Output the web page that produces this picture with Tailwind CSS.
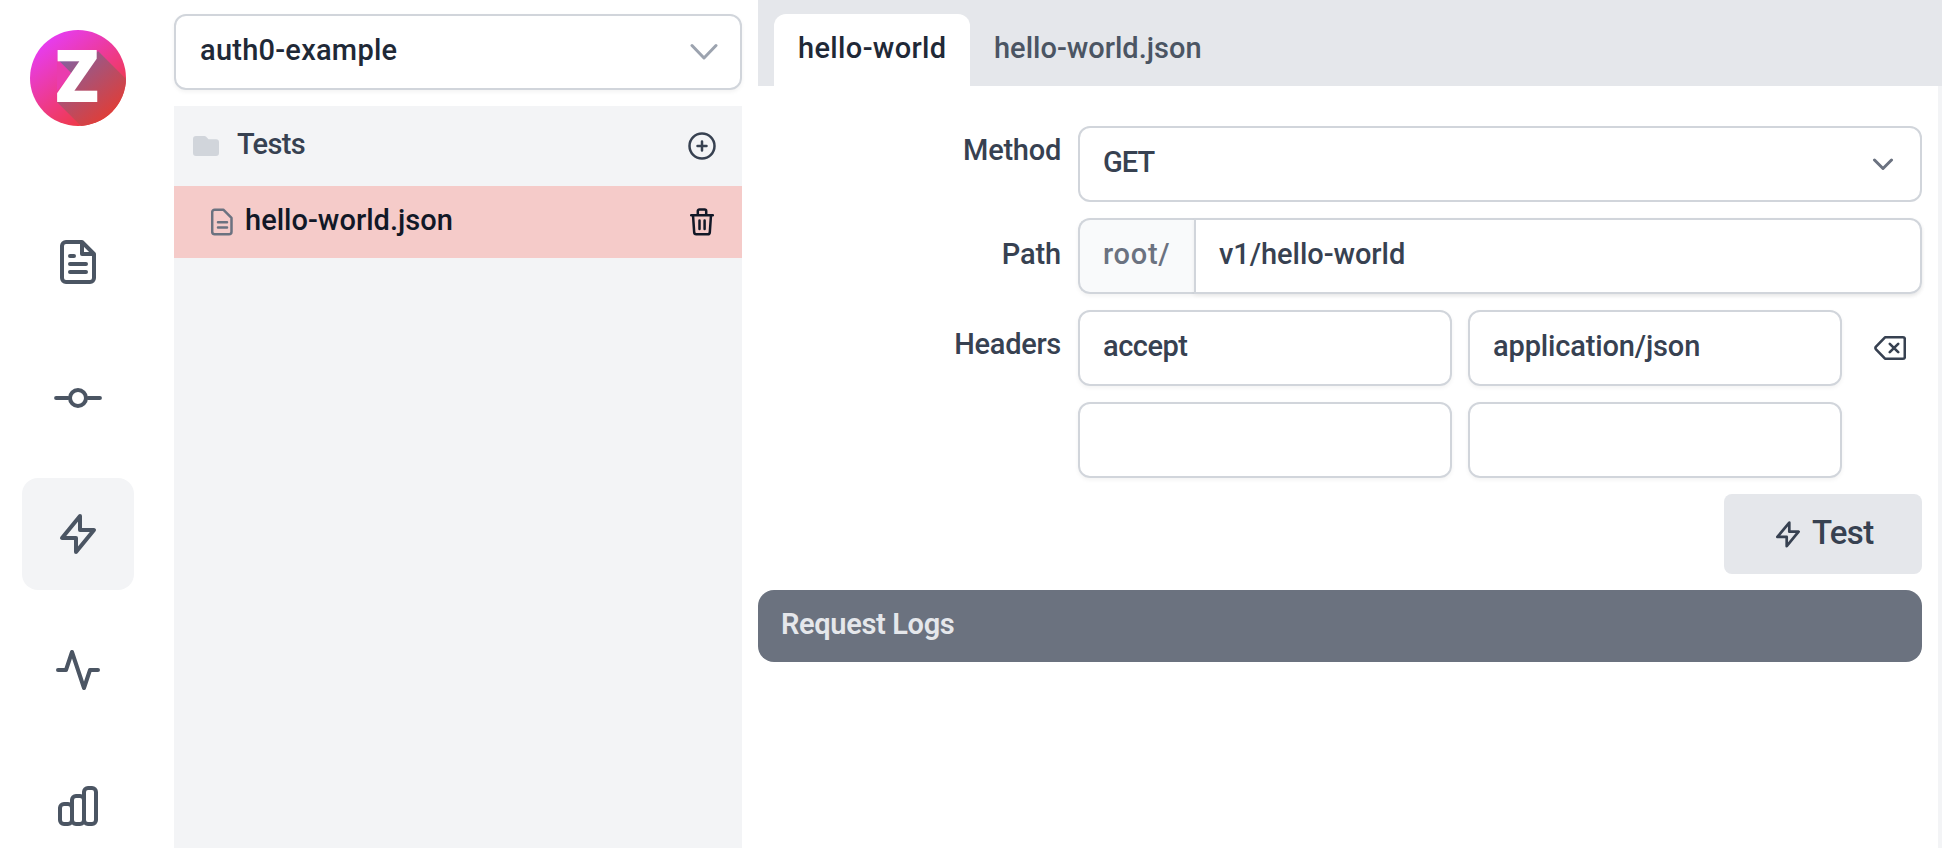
<!DOCTYPE html>
<html lang="en">
<head>
<meta charset="utf-8">
<title>auth0-example</title>
<script src="https://cdn.jsdelivr.net/npm/@tailwindcss/browser@4"></script>
</head>
<body class="bg-white">
<div class="flex h-[848px] w-[1942px] overflow-hidden font-['Roboto',sans-serif] text-[29px] leading-10 font-medium text-[#374151]">

  <!-- Icon rail -->
  <nav class="flex w-[174px] shrink-0 flex-col pl-[22px] pt-[30px] text-[#4b5563]">
    <svg class="ml-2 size-24 shrink-0 overflow-visible" viewBox="0 0 96 96">
      <defs>
        <linearGradient id="disc" x1="0.15" y1="0.1" x2="0.78" y2="0.94"><stop offset="0" stop-color="#e63cf4"/><stop offset="0.55" stop-color="#ee3a86"/><stop offset="1" stop-color="#ee3a34"/></linearGradient>
        <linearGradient id="cast" gradientUnits="userSpaceOnUse" x1="32" y1="28" x2="78" y2="84"><stop offset="0" stop-color="#85609f"/><stop offset="1" stop-color="#dc3f3c"/></linearGradient>
        <clipPath id="round"><circle cx="48" cy="48" r="48"/></clipPath>
      </defs>
      <g clip-path="url(#round)">
        <rect width="96" height="96" fill="url(#disc)"/>
        <path d="M68 21L120 73V120H75L27 72L42 44L28 30H60z" fill="url(#cast)"/>
        <path d="M27 29L41.500 43.500L27 61z" fill="#ea3cae"/>
      </g>
      <text x="25" y="72" textLength="44" lengthAdjust="spacingAndGlyphs" font-family="Open Sans" font-weight="800" font-size="72.500" fill="#fff">Z</text>
    </svg>
    <div class="mt-20 flex flex-col gap-6">
      <a class="flex size-28 items-center justify-center rounded-2xl"><svg class="size-12" viewBox="0 0 24 24" fill="none" stroke="currentColor" stroke-width="2" stroke-linecap="round" stroke-linejoin="round"><path d="M14 2H6a2 2 0 0 0-2 2v16a2 2 0 0 0 2 2h12a2 2 0 0 0 2-2V8zM14 2v6h6M16 13H8M16 17H8M10 9H8"/></svg></a>
      <a class="flex size-28 items-center justify-center rounded-2xl"><svg class="size-12" viewBox="0 0 24 24" fill="none" stroke="currentColor" stroke-width="2" stroke-linecap="round"><circle cx="12" cy="12" r="4"/><path d="M1.050 12H7M17.010 12h5.950"/></svg></a>
      <a class="flex size-28 items-center justify-center rounded-2xl bg-[#f3f4f6]"><svg class="size-12" viewBox="0 0 24 24" fill="none" stroke="currentColor" stroke-width="2" stroke-linecap="round" stroke-linejoin="round"><path d="M13 10V3L4 14h7v7l9-11h-7z"/></svg></a>
      <a class="flex size-28 items-center justify-center rounded-2xl"><svg class="size-12" viewBox="0 0 24 24" fill="none" stroke="currentColor" stroke-width="2" stroke-linecap="round" stroke-linejoin="round"><path d="M22 12h-4l-3 9L9 3l-3 9H2"/></svg></a>
      <a class="flex size-28 items-center justify-center rounded-2xl"><svg class="size-12" viewBox="0 0 24 24" fill="none" stroke="currentColor" stroke-width="2" stroke-linecap="round" stroke-linejoin="round"><path d="M9 19v-6a2 2 0 00-2-2H5a2 2 0 00-2 2v6a2 2 0 002 2h2a2 2 0 002-2zm0 0V9a2 2 0 012-2h2a2 2 0 012 2v10m-6 0a2 2 0 002 2h2a2 2 0 002-2m0 0V5a2 2 0 012-2h2a2 2 0 012 2v14a2 2 0 01-2 2h-2a2 2 0 01-2-2z"/></svg></a>
    </div>
  </nav>

  <!-- File list -->
  <aside class="flex w-[568px] shrink-0 flex-col pt-[14px]">
    <div class="flex h-[76px] shrink-0 items-center justify-between rounded-xl border-2 border-[#d1d5db] pl-6 pr-[22px] shadow-[0_2px_4px_rgba(0,0,0,0.05)]">
      <span class="pb-[5px] tracking-[0.25px] text-[#1f2937]">auth0-example</span>
      <svg class="h-[18px] w-7 text-[#9ca3af]" viewBox="0 0 28 18" fill="none" stroke="currentColor" stroke-width="3" stroke-linecap="round" stroke-linejoin="round"><path d="M2 2.500l12 12.500 12-12.500"/></svg>
    </div>
    <div class="mt-4 flex-1 bg-[#f3f4f6]">
      <div class="flex h-20 items-center pl-[19px] pr-[26px]">
        <svg class="h-5 w-[26px] text-[#d1d5db]" viewBox="0 0 26 20" fill="currentColor"><path d="M3 0h8.500a2 2 0 0 1 1.400.6L15.500 3.300H23a3 3 0 0 1 3 3V17a3 3 0 0 1-3 3H3a3 3 0 0 1-3-3V3a3 3 0 0 1 3-3z"/></svg>
        <span class="ml-[18px] flex-1 pb-[5px] tracking-[-0.7px]">Tests</span>
        <svg class="size-7" viewBox="0 0 28 28" fill="none" stroke="currentColor" stroke-width="2.500" stroke-linecap="round"><circle cx="14" cy="14" r="12.500"/><path d="M14 9.500v9M9.500 14h9"/></svg>
      </div>
      <div class="flex h-[72px] items-center bg-[#f5cbc9] pl-[37px] pr-7 text-[#111827]">
        <svg class="h-[28px] w-[22px] text-[#6b7280]" viewBox="0 0 22 28" fill="none" stroke="currentColor" stroke-width="2.500" stroke-linecap="round" stroke-linejoin="round"><path d="M3.700 1.700H12.300L20.500 9.900V23.800a2.500 2.500 0 0 1-2.500 2.500H3.700a2.500 2.500 0 0 1-2.500-2.500V4.200a2.500 2.500 0 0 1 2.500-2.500zM7 14.300h9M7 19.500h9"/></svg>
        <span class="ml-3 flex-1 pb-[5px] tracking-[0.02px]">hello-world.json</span>
        <svg class="h-7 w-6" viewBox="0 0 24 28" fill="none" stroke="currentColor" stroke-width="2.500" stroke-linecap="round" stroke-linejoin="round"><path d="M1.200 7.200H22.800M3 7.200L4.200 24.400a2 2 0 0 0 2 1.900h11.600a2 2 0 0 0 2-1.900L21 7.200M7.800 7V3a1.600 1.600 0 0 1 1.600-1.600h5.200A1.600 1.600 0 0 1 16.200 3V7M9.500 12.500v8.500M14.600 12.500v8.500"/></svg>
      </div>
    </div>
  </aside>

  <!-- Editor -->
  <main class="ml-4 flex flex-1 flex-col">
    <div class="flex h-[86px] shrink-0 items-end bg-[#e5e7eb] pl-4">
      <div class="flex h-[72px] w-[196px] items-center rounded-t-xl bg-white pl-6"><span class="pb-[5px] tracking-[0.35px] text-[#1f2937]">hello-world</span></div>
      <div class="flex h-[72px] items-center pl-6"><span class="pb-[5px] text-[#4b5563]">hello-world.json</span></div>
    </div>
    <div class="flex flex-1 flex-col gap-4 border-r-4 border-[#f3f4f6] pr-4 pt-10">
      <div class="grid grid-cols-[303px_844px] gap-x-[17px] gap-y-4">
        <div class="pt-1 text-right tracking-[-0.25px]">Method</div>
        <div class="flex h-[76px] items-center justify-between rounded-xl border-2 border-[#d1d5db] pl-[23px] pr-[26px]">
          <span class="pb-[5px] tracking-[-0.9px]">GET</span>
          <svg class="h-[13px] w-[22px] text-[#6b7280]" viewBox="0 0 22 13" fill="none" stroke="currentColor" stroke-width="3" stroke-linecap="round" stroke-linejoin="round"><path d="M2.500 2l8.500 8.500 8.500-8.500"/></svg>
        </div>

        <div class="flex items-center justify-end pb-[5px] tracking-[-0.1px]">Path</div>
        <div class="flex h-[76px] rounded-xl shadow-[0_2px_4px_rgba(0,0,0,0.05)]">
          <div class="flex w-[116px] items-center rounded-l-xl border-y-2 border-l-2 border-[#d1d5db] bg-[#f9fafb] pl-[23px] text-[#6b7280]"><span class="pb-[5px] tracking-[0.7px]">root/</span></div>
          <div class="flex flex-1 items-center rounded-r-xl border-2 border-[#d1d5db] pl-[23px] shadow-[0_2px_4px_rgba(0,0,0,0.06)]"><span class="pb-[5px] tracking-[-0.05px]">v1/hello-world</span></div>
        </div>

        <div class="pt-[14px] text-right tracking-[-0.3px]">Headers</div>
        <div class="grid grid-cols-[374px_374px_32px] gap-4">
          <div class="flex h-[76px] items-center rounded-xl border-2 border-[#d1d5db] pl-[23px] shadow-[0_2px_4px_rgba(0,0,0,0.05)]"><span class="pb-[5px] tracking-[-0.5px]">accept</span></div>
          <div class="flex h-[76px] items-center rounded-xl border-2 border-[#d1d5db] pl-[23px] shadow-[0_2px_4px_rgba(0,0,0,0.05)]"><span class="pb-[5px] tracking-[-0.15px]">application/json</span></div>
          <div class="flex items-center pl-4"><svg class="h-6 w-8 shrink-0" viewBox="0 0 32 24" fill="none" stroke="currentColor" stroke-width="2.600" stroke-linecap="round" stroke-linejoin="round"><path d="M11 1.300H29a1.800 1.800 0 0 1 1.800 1.800V20.900a1.800 1.800 0 0 1-1.800 1.800H11L2 13.300a2 2 0 0 1 0-2.600zM15.800 7.800l8.400 8.400M24.200 7.800l-8.400 8.400"/></svg></div>
          <div class="h-[76px] rounded-xl border-2 border-[#d1d5db] shadow-[0_2px_4px_rgba(0,0,0,0.05)]"></div>
          <div class="h-[76px] rounded-xl border-2 border-[#d1d5db] shadow-[0_2px_4px_rgba(0,0,0,0.05)]"></div>
        </div>
      </div>
      <button class="flex h-20 w-[198px] items-center self-end rounded-lg bg-[#e5e7eb] pl-[52px] text-[33px]">
        <svg class="h-[27px] w-6" viewBox="0 0 24 27" fill="none" stroke="currentColor" stroke-width="2.700" stroke-linecap="round" stroke-linejoin="round"><path d="M13.300 10.700V1.600L1.400 15.900h9.300v9.300L22.600 10.700z"/></svg>
        <span class="ml-3 pb-[3px] tracking-[-0.7px]">Test</span>
      </button>
      <div class="flex h-[72px] items-center rounded-2xl bg-[#6b727f] pl-[23px] font-semibold text-[#e5e7eb]"><span class="pb-[5px] tracking-[-0.35px]">Request Logs</span></div>
    </div>
  </main>
</div>
</body>
</html>
